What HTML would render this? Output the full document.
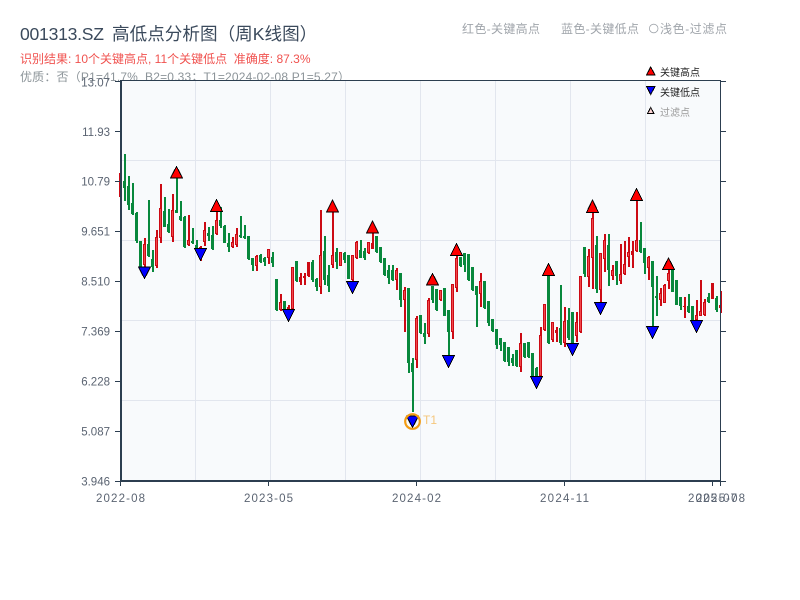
<!DOCTYPE html>
<html lang="zh">
<head>
<meta charset="utf-8">
<title>001313.SZ 高低点分析图</title>
<style>
html,body{margin:0;padding:0;background:#fff;}
body{width:800px;height:600px;overflow:hidden;}
svg{display:block;}
text{font-family:"Liberation Sans","Noto Sans CJK SC",sans-serif;}
.yl{font-size:11.5px;fill:#5b6472;text-anchor:end;}
.xl{font-size:11.5px;fill:#5b6472;text-anchor:middle;}
.tu{fill:#f00;stroke:#000;stroke-width:1;}
.td{fill:#00f;stroke:#000;stroke-width:1;}
</style>
</head>
<body>
<svg width="800" height="600" viewBox="0 0 800 600" xmlns="http://www.w3.org/2000/svg">
<text x="20" y="40" font-size="17.6" fill="#3b4a5c" textLength="84">001313.SZ</text>
<text x="112" y="40" font-size="17.6" fill="#3b4a5c">高低点分析图（周K线图）</text>
<text x="20" y="63" font-size="12" fill="#f0524f">识别结果: 10个关键高点, 11个关键低点&#160;&#160;准确度: 87.3%</text>
<text x="20" y="81" font-size="12" fill="#8c9499" textLength="330">优质：否（P1=41.7%&#160;&#160;B2=0.33；T1=2024-02-08 P1=5.27）</text>

<text x="462" y="33" font-size="12" fill="#a0a5ab" textLength="78">红色-关键高点</text>
<text x="561" y="33" font-size="12" fill="#a0a5ab" textLength="78">蓝色-关键低点</text>
<circle cx="653.7" cy="28.5" r="4.3" fill="none" stroke="#a0a5ab" stroke-width="0.8"/>
<text x="660" y="33" font-size="12" fill="#a0a5ab" textLength="67">浅色-过滤点</text>

<rect x="121" y="81" width="600" height="400" fill="#f8fafc"/>
<path d="M195.5 81V481M270.5 81V481M345.5 81V481M420.5 81V481M495.5 81V481M570.5 81V481M645.5 81V481M121 160.5H721M121 240.5H721M121 320.5H721M121 400.5H721" stroke="#e2e6ee" stroke-width="1" fill="none"/>

<g shape-rendering="crispEdges">
<path transform="translate(.5 0)" fill="none" stroke="#08883c" stroke-width="2" d="M124.5 154V201M128.5 176V210M132.5 183V215M136.5 212V243M140.5 241V267M148.5 200V257M152.5 250V272M164.5 197V227M168.5 209V233M176.5 178V213M180.5 201V221M184.5 216V248M192.5 228V244M196.5 240V249M208.5 227V241M212.5 226V250M220.5 207V228M224.5 225V243M228.5 233V252M240.5 216V238M244.5 225V239M248.5 236V260M252.5 258V271M260.5 254V263M264.5 257V266M272.5 252V267M276.5 279V311M284.5 301V310M296.5 261V282M312.5 260V282M316.5 278V291M324.5 236V285M328.5 265V292M336.5 248V269M344.5 252V263M348.5 255V279M360.5 240V258M364.5 248V260M376.5 236V253M380.5 247V263M384.5 258V276M388.5 265V284M392.5 265V281M400.5 273V307M408.5 288V373M412.5 358V412M420.5 315V334M424.5 323V344M432.5 286V303M436.5 289V311M444.5 288V316M448.5 310V356M460.5 257V267M464.5 253V272M468.5 254V281M472.5 267V291M476.5 286V327M484.5 281V309M488.5 301V326M492.5 319V332M496.5 329V349M500.5 338V351M504.5 342V362M508.5 347V366M512.5 354V366M516.5 350V367M524.5 343V358M528.5 342V358M532.5 353V377M536.5 367V378M548.5 275V344M560.5 285V345M568.5 308V340M572.5 312V347M584.5 247V277M596.5 236V293M608.5 234V286M616.5 261V285M640.5 222V253M644.5 248V274M652.5 261V327M656.5 276V316M672.5 270V292M676.5 280V305M680.5 297V310M688.5 294V313M692.5 306V322M708.5 293V303M716.5 296V312"/>
<path fill="none" stroke="#08883c" stroke-width="3" d="M124.5 181V188M128.5 186V205M132.5 203V214M136.5 213V241M140.5 241V267M148.5 244V256M152.5 259V267M164.5 211V227M168.5 224V232M176.5 210V213M180.5 216V220M184.5 217V247M192.5 241V243M196.5 245V249M208.5 233V236M212.5 235V249M220.5 220V226M224.5 226V243M228.5 243V247M240.5 235V237M244.5 236V238M248.5 236V259M252.5 258V265M260.5 255V262M264.5 258V262M272.5 257V263M276.5 279V310M284.5 301V309M296.5 261V281M312.5 262V280M316.5 279V287M324.5 251V280M328.5 275V286M336.5 252V262M344.5 253V260M348.5 255V279M360.5 250V258M364.5 251V258M376.5 236V252M380.5 247V262M384.5 258V275M388.5 270V278M392.5 270V280M400.5 273V300M408.5 288V363M412.5 363V372M420.5 315V333M424.5 333V337M432.5 286V300M436.5 289V310M444.5 288V316M448.5 310V332M460.5 257V266M464.5 253V265M468.5 254V280M472.5 267V290M476.5 286V295M484.5 281V308M488.5 301V323M492.5 319V331M496.5 329V345M500.5 338V345M504.5 342V361M508.5 347V362M512.5 358V363M516.5 350V366M524.5 343V357M528.5 342V357M532.5 353V376M536.5 368V377M548.5 275V343M560.5 328V343M568.5 320V338M572.5 312V343M584.5 247V274M596.5 245V289M608.5 245V270M616.5 261V276M640.5 240V252M644.5 248V263M652.5 261V287M656.5 296V298M672.5 270V292M676.5 280V305M680.5 297V306M688.5 306V312M692.5 306V320M708.5 297V302M716.5 298V310"/>

<path transform="translate(.5 0)" fill="none" stroke="#cc0a14" stroke-width="2" d="M120.5 173V197M144.5 238V267M156.5 230V268M160.5 184V243M172.5 194V242M188.5 215V246M200.5 246V261M204.5 222V246M216.5 205V235M232.5 237V248M236.5 228V247M256.5 255V271M268.5 249V264M280.5 294V311M288.5 305V311M292.5 267V310M300.5 273V285M304.5 273V285M308.5 262V277M320.5 210V294M332.5 212V268M340.5 252V266M352.5 255V281M356.5 241V259M368.5 242V254M372.5 233V249M396.5 268V290M404.5 287V332M416.5 316V368M428.5 298V337M440.5 290V301M452.5 284V339M456.5 255V292M480.5 273V307M520.5 333V372M540.5 327V377M544.5 304V331M552.5 322V342M556.5 327V342M564.5 307V347M576.5 312V342M580.5 276V333M588.5 249V287M592.5 213V289M600.5 253V303M604.5 234V272M612.5 265V280M620.5 244V284M624.5 241V275M628.5 237V267M632.5 241V268M636.5 201V252M648.5 256V280M660.5 288V306M664.5 284V303M668.5 269V289M684.5 297V318M696.5 300V322M700.5 280V316M704.5 299V316M712.5 283V299M720.5 291V313"/>
<path fill="none" stroke="#cc0a14" stroke-width="3" d="M120.5 173V197M144.5 244V265M156.5 237V266M160.5 208V238M172.5 210V237M188.5 240V245M200.5 247V249M204.5 230V242M216.5 220V234M232.5 242V247M236.5 234V245M256.5 256V266M268.5 249V258M280.5 302V310M288.5 307V310M292.5 267V309M300.5 277V282M304.5 276V278M308.5 262V276M320.5 255V287M332.5 255V265M340.5 252V266M352.5 255V280M356.5 242V258M368.5 242V253M372.5 243V249M396.5 270V280M404.5 290V300M416.5 318V360M428.5 300V334M440.5 290V300M452.5 284V332M456.5 258V288M480.5 281V294M520.5 343V367M540.5 335V376M544.5 304V330M552.5 322V340M556.5 330V333M564.5 321V343M576.5 322V336M580.5 276V332M588.5 256V277M592.5 218V258M600.5 253V290M604.5 240V259M612.5 270V276M620.5 274V281M624.5 264V274M628.5 252V257M632.5 251V255M636.5 240V251M648.5 257V268M660.5 293V300M664.5 285V303M668.5 273V281M684.5 306V307M696.5 315V320M700.5 311V316M704.5 302V315M712.5 283V299M720.5 305V308"/>
<path fill="none" stroke="#f0484c" stroke-width="1" d="M144.5 245V264M156.5 238V265M160.5 209V237M172.5 211V236M188.5 241V244M204.5 231V241M216.5 221V233M232.5 243V246M236.5 235V244M256.5 257V265M268.5 250V257M280.5 303V309M292.5 268V308M320.5 256V286M332.5 256V264M340.5 253V265M352.5 256V279M356.5 243V257M368.5 243V252M396.5 271V279M404.5 291V299M416.5 319V359M428.5 301V333M440.5 291V299M452.5 285V331M456.5 259V287M480.5 282V293M520.5 344V366M540.5 336V375M544.5 305V329M552.5 323V339M564.5 322V342M576.5 323V335M580.5 277V331M588.5 257V276M592.5 219V257M600.5 254V289M604.5 241V258M612.5 271V275M620.5 275V280M624.5 265V273M628.5 253V256M636.5 241V250M648.5 258V267M660.5 294V299M664.5 286V302M668.5 274V280M696.5 316V319M700.5 312V315M704.5 303V314"/>
</g>

<g shape-rendering="crispEdges">
<polygon class="td" points="138.5,267 150.5,267 144.5,278.5"/>
<polygon class="tu" points="170.5,178 182.5,178 176.5,166.5"/>
<polygon class="td" points="194.5,248.5 206.5,248.5 200.5,260.5"/>
<polygon class="tu" points="210.5,211.5 222.5,211.5 216.5,199.5"/>
<polygon class="td" points="282.5,309.5 294.5,309.5 288.5,321.5"/>
<polygon class="tu" points="326.5,212 338.5,212 332.5,200"/>
<polygon class="td" points="346.5,281.5 358.5,281.5 352.5,293.5"/>
<polygon class="tu" points="366.5,233 378.5,233 372.5,221"/>
<polygon class="tu" points="426.5,285 438.5,285 432.5,273.5"/>
<polygon class="td" points="442.5,355.5 454.5,355.5 448.5,367.5"/>
<polygon class="tu" points="450.5,255.5 462.5,255.5 456.5,243.5"/>
<polygon class="td" points="530.5,376.5 542.5,376.5 536.5,388.5"/>
<polygon class="tu" points="542.5,275.5 554.5,275.5 548.5,263.5"/>
<polygon class="td" points="566.5,343.5 578.5,343.5 572.5,355.5"/>
<polygon class="tu" points="586.5,212.5 598.5,212.5 592.5,200"/>
<polygon class="td" points="594.5,302.5 606.5,302.5 600.5,314.5"/>
<polygon class="tu" points="630.5,200.5 642.5,200.5 636.5,188.5"/>
<polygon class="td" points="646.5,326.5 658.5,326.5 652.5,338.5"/>
<polygon class="tu" points="662.5,269.5 674.5,269.5 668.5,258"/>
<polygon class="td" points="690.5,320.5 702.5,320.5 696.5,332.5"/>
<polygon class="td" points="406.5,416 418.5,416 412.5,427.5"/>
</g>
<circle cx="412.5" cy="421.5" r="7.3" fill="none" stroke="#f39c12" stroke-width="2.2"/>
<text x="423" y="424" font-size="12" fill="#f39c12" fill-opacity="0.55">T1</text>

<path d="M121 80.5H721M720.5 80V481" stroke="#2c3e50" stroke-width="1" fill="none"/>
<path d="M121 80V482M120 481H721" stroke="#2c3e50" stroke-width="2" fill="none"/>
<path d="M115 81.5H120M115 131.5H120M115 181.5H120M115 231.5H120M115 281.5H120M115 331.5H120M115 381.5H120M115 431.5H120M115 481.5H120M721 81.5H726M721 131.5H726M721 181.5H726M721 231.5H726M721 281.5H726M721 331.5H726M721 381.5H726M721 431.5H726M721 481.5H726M120.5 481V486M268.5 481V486M416.5 481V486M564.5 481V486M712.5 481V486M720.5 481V486" stroke="#2c3e50" stroke-width="1" fill="none"/>

<g shape-rendering="crispEdges">
<polygon points="646.5,75 655,75 650.7,67" fill="#f00" stroke="#000"/>
<polygon points="646.5,86.5 655,86.5 650.7,94.5" fill="#00f" stroke="#000"/>
<polygon points="647.5,113.5 654,113.5 650.7,107.5" fill="#ffd6d6" stroke="#000"/>
</g>
<text x="660" y="76" font-size="10" fill="#222">关键高点</text>
<text x="660" y="96" font-size="10" fill="#222">关键低点</text>
<text x="660" y="116" font-size="10" fill="#999">过滤点</text>

<text class="yl" x="110" y="86.5">13.07</text>
<text class="yl" x="110" y="136">11.93</text>
<text class="yl" x="110" y="185.5">10.79</text>
<text class="yl" x="110" y="235.5">9.651</text>
<text class="yl" x="110" y="285.5">8.510</text>
<text class="yl" x="110" y="335.5">7.369</text>
<text class="yl" x="110" y="385.5">6.228</text>
<text class="yl" x="110" y="435.5">5.087</text>
<text class="yl" x="110" y="485.5">3.946</text>

<text class="xl" x="120.5" y="502" textLength="49">2022-08</text>
<text class="xl" x="268.5" y="502" textLength="49">2023-05</text>
<text class="xl" x="416.5" y="502" textLength="49">2024-02</text>
<text class="xl" x="564.5" y="502" textLength="49">2024-11</text>
<text class="xl" x="712.5" y="502" textLength="49">2025-07</text>
<text class="xl" x="720.5" y="502" textLength="49">2025-08</text>
</svg>
</body>
</html>
